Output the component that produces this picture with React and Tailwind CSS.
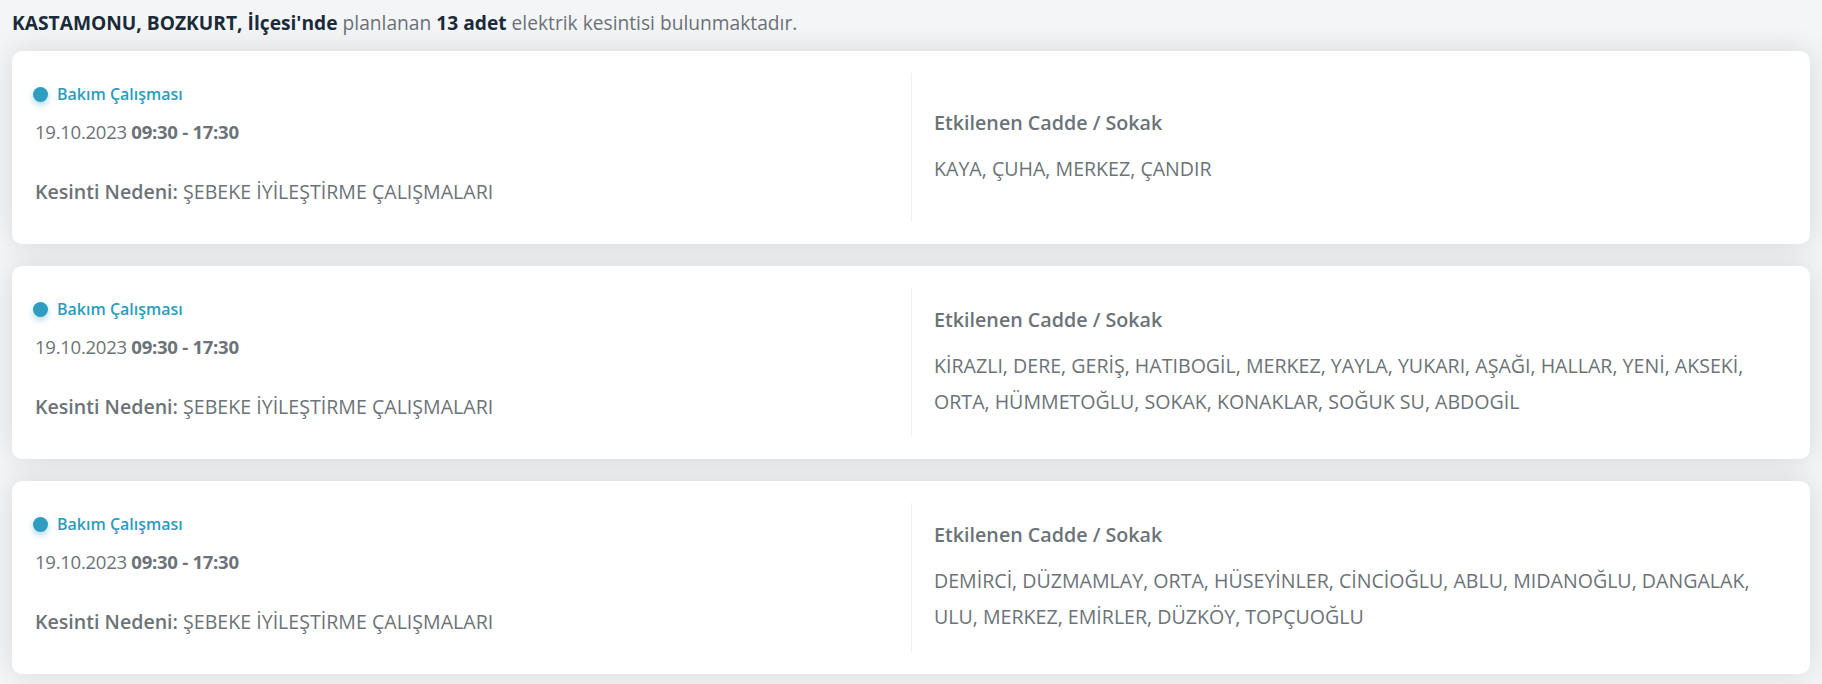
const outages = [
  {
    date: '19.10.2023',
    time: '09:30 - 17:30',
    reason: 'ŞEBEKE İYİLEŞTİRME ÇALIŞMALARI',
    streets: 'KAYA, ÇUHA, MERKEZ, ÇANDIR',
  },
  {
    date: '19.10.2023',
    time: '09:30 - 17:30',
    reason: 'ŞEBEKE İYİLEŞTİRME ÇALIŞMALARI',
    streets:
      'KİRAZLI, DERE, GERİŞ, HATIBOGİL, MERKEZ, YAYLA, YUKARI, AŞAĞI, HALLAR, YENİ, AKSEKİ, ORTA, HÜMMETOĞLU, SOKAK, KONAKLAR, SOĞUK SU, ABDOGİL',
  },
  {
    date: '19.10.2023',
    time: '09:30 - 17:30',
    reason: 'ŞEBEKE İYİLEŞTİRME ÇALIŞMALARI',
    streets:
      'DEMİRCİ, DÜZMAMLAY, ORTA, HÜSEYİNLER, CİNCİOĞLU, ABLU, MIDANOĞLU, DANGALAK, ULU, MERKEZ, EMİRLER, DÜZKÖY, TOPÇUOĞLU',
  },
];

const OutageCard = ({ item }) => {
  return (
    <div className="bg-white rounded-[10px] shadow-[0_0_30px_rgba(0,0,0,0.12)] py-[22px] grid grid-cols-2">
      <div className="px-[23px] flex flex-col">
        <div className="mt-[11px] flex items-center h-[20px]">
          <span className="-ml-[2px] w-[15px] h-[15px] rounded-full bg-[#2e9dbf] shadow-[0_3px_6px_rgba(46,157,191,0.4)] mr-[9px]"></span>
          <span className="text-[16px] font-semibold text-[#2b9cbd]">Bakım Çalışması</span>
        </div>
        <div className="mt-[14px] text-[18.6px] leading-[28px] text-[#6c7378] tracking-[-0.3px]">
          {item.date} <span className="font-bold">{item.time}</span>
        </div>
        <div className="mt-[31px] mb-[15px] text-[19.6px] leading-[30px] text-[#6c7378]">
          <span className="font-semibold">Kesinti Nedeni:</span> {item.reason}
        </div>
      </div>
      <div className="border-l border-[#f0f0f1] pl-[22px] pr-[18px] flex flex-col justify-center">
        <div className="text-[19.7px] leading-[30px] font-semibold text-[#6c7378]">Etkilenen Cadde / Sokak</div>
        <div className="mt-[13px] text-[19.6px] leading-[36px] text-[#6c7378]">{item.streets}</div>
      </div>
    </div>
  );
};

export default function App() {
  return (
    <div className="min-h-screen bg-[#f4f5f7] px-[12px] pb-[10px] font-['Open_Sans',sans-serif]">
      <div className="pt-[10px] mb-[15px] text-[19.2px] leading-[26px] text-[#6b7177]">
        <span className="font-bold text-[#1c2b39]">KASTAMONU, BOZKURT, İlçesi'nde</span> planlanan{' '}
        <span className="font-bold text-[#1c2b39]">13 adet</span> elektrik kesintisi bulunmaktadır.
      </div>
      <div className="flex flex-col gap-[22px]">
        {outages.map((item, i) => (
          <OutageCard key={i} item={item} />
        ))}
      </div>
    </div>
  );
}
